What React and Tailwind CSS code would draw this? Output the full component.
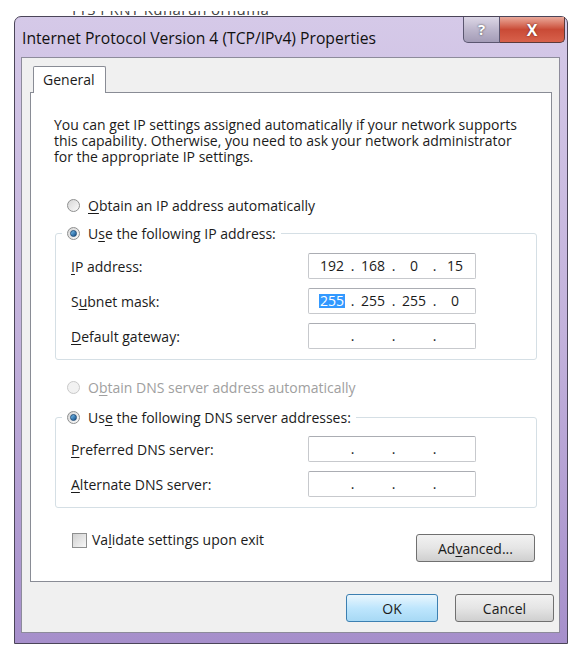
import React from 'react';

const U = ({ children }) => <span className="underline underline-offset-2">{children}</span>;

const Radio = ({ checked, disabled }) => (
  <span
    className={`inline-flex items-center justify-center w-[13px] h-[13px] rounded-full border shrink-0 ${
      disabled ? 'border-[#c9c9c9] bg-[#f2f2f2]' : 'border-[#8e8f8f] bg-gradient-to-br from-[#d6d6d6] to-[#fbfbfb]'
    }`}
  >
    {checked && (
      <span className="w-[7px] h-[7px] rounded-full bg-gradient-to-br from-[#7cc3f0] to-[#0d4e8a] border border-[#1f4d7a]" />
    )}
  </span>
);

const IpBox = ({ parts, selectFirst }) => (
  <div className="w-[168px] h-[26px] border border-[#c7c9cd] border-t-[#abadb3] rounded-[2px] bg-white flex items-center pl-[7px] text-[14px] leading-none">
    {[0, 1, 2, 3].map((i) => (
      <React.Fragment key={i}>
        <span className="w-[32px] flex justify-center">
          {parts[i] ? (
            <span className={i === 0 && selectFirst ? 'bg-[#3399ff] text-white px-px' : ''}>{parts[i]}</span>
          ) : null}
        </span>
        {i < 3 && <span className="w-[9px] text-center">.</span>}
      </React.Fragment>
    ))}
  </div>
);

const Row = ({ label, parts, selectFirst, first }) => (
  <div className={`flex items-center h-[26px] pl-[15px] ${first ? '' : 'mt-[9px]'}`}>
    <span className="w-[237px]">{label}</span>
    <IpBox parts={parts} selectFirst={selectFirst} />
  </div>
);

const WinButton = ({ children, primary, className = '' }) => (
  <button
    className={`h-[28px] rounded-[3px] border text-[14px] ${
      primary
        ? 'border-[#3c7fb1] bg-gradient-to-b from-[#eaf6fd] via-[#bee6fd] to-[#a7d9f5]'
        : 'border-[#707070] bg-gradient-to-b from-[#f2f2f2] via-[#e5e5e5] to-[#cfcfcf]'
    } ${className}`}
  >
    {children}
  </button>
);

export default function App() {
  return (
    <div className="w-[583px] h-[655px] bg-white overflow-hidden font-['Open_Sans','Noto_Sans',sans-serif] text-[14px] text-[#1b1b1b]">
      {/* window behind, mostly hidden */}
      <div className="h-[16px] pt-[11px]">
        <div className="h-[5px] overflow-hidden pl-[70px]">
          <div className="mt-[-12px] text-[15px] leading-[20px] text-[#444] tracking-wide whitespace-nowrap">
            TTS PRNT Kunarun ornuma
          </div>
        </div>
      </div>

      <div className="ml-[14px] w-[554px] h-[628px] rounded-t-[7px] border border-[#4b4559] bg-gradient-to-b from-[#d5c9e8] via-[#c3b2dc] to-[#a68fcb] flex flex-col">
        {/* title bar */}
        <div className="h-[40px] flex items-start">
          <div className="pl-[7px] pt-[11px] text-[15.7px] text-[#111] leading-[20px]">
            Internet Protocol Version 4 (TCP/IPv4) Properties
          </div>
          <div className="ml-auto mr-[2px] flex">
            <div className="w-[37px] h-[26px] rounded-bl-[5px] border border-t-0 border-[#5b5670] bg-gradient-to-b from-[#dcd7e6] via-[#bdb6cc] to-[#a49cb7] flex items-center justify-center text-[15px] font-bold text-white [text-shadow:0_0_2px_#333]">
              ?
            </div>
            <div className="w-[65px] h-[26px] rounded-br-[5px] border border-l-0 border-t-0 border-[#5b3a3a] bg-gradient-to-b from-[#e9a89a] via-[#c94a36] to-[#d8614b] flex items-center justify-center text-[16px] font-bold text-white [text-shadow:0_0_2px_#5a1a10]">
              X
            </div>
          </div>
        </div>

        {/* client area */}
        <div className="ml-[6px] mr-[7px] h-[576px] border border-[#8d8b9b] bg-[#f0f0f0] flex flex-col pt-[8px]">
          <div className="ml-[11px] w-[73px] h-[27px] -mb-px relative z-10 bg-white border border-b-0 border-[#898c95] rounded-t-[2px] pl-[9px] pt-[4px] leading-[18px]">
            General
          </div>
          <div className="ml-[8px] mr-[7px] h-[490px] border border-[#898c95] bg-white pl-[23px] pr-[10px] pt-[24px] flex flex-col">
            <p className="leading-[16px] whitespace-nowrap">
              You can get IP settings assigned automatically if your network supports
              <br />
              this capability. Otherwise, you need to ask your network administrator
              <br />
              for the appropriate IP settings.
            </p>

            <div className="mt-[30px] h-[20px] flex items-center pl-[13px] gap-[8px]">
              <Radio />
              <span>
                <U>O</U>btain an IP address automatically
              </span>
            </div>

            <fieldset className="mt-[8px] ml-px mr-[4px] border border-[#d5dfe5] rounded-[3px] pb-[10px]">
              <legend className="ml-[6px] px-[5px] h-[20px] flex items-center gap-[8px]">
                <Radio checked />
                <span>
                  U<U>s</U>e the following IP address:
                </span>
              </legend>
              <div className="mt-[10px]">
                <Row first label={<><U>I</U>P address:</>} parts={['192', '168', '0', '15']} />
                <Row label={<>S<U>u</U>bnet mask:</>} parts={['255', '255', '255', '0']} selectFirst />
                <Row label={<><U>D</U>efault gateway:</>} parts={[]} />
              </div>
            </fieldset>

            <div className="mt-[17px] h-[20px] flex items-center pl-[13px] gap-[8px] text-[#a0a0a0]">
              <Radio disabled />
              <span>
                O<U>b</U>tain DNS server address automatically
              </span>
            </div>

            <fieldset className="mt-[10px] ml-px mr-[4px] border border-[#d5dfe5] rounded-[3px] pb-[10px]">
              <legend className="ml-[6px] px-[5px] h-[20px] flex items-center gap-[8px]">
                <Radio checked />
                <span>
                  Us<U>e</U> the following DNS server addresses:
                </span>
              </legend>
              <div className="mt-[9px]">
                <Row first label={<><U>P</U>referred DNS server:</>} parts={[]} />
                <Row label={<><U>A</U>lternate DNS server:</>} parts={[]} />
              </div>
            </fieldset>

            <div className="mt-[25px] h-[29px] flex items-start">
              <span className="ml-[18px] w-[15px] h-[15px] border border-[#8e8f8f] bg-gradient-to-br from-[#d0d0d0] to-[#f8f8f8] shrink-0" />
              <span className="ml-[5px] leading-[16px] mt-[-1px]">
                Va<U>l</U>idate settings upon exit
              </span>
              <WinButton className="ml-auto mr-[6px] mt-px w-[119px]">
                Ad<U>v</U>anced...
              </WinButton>
            </div>
          </div>

          <div className="mt-[12px] mr-[5px] flex justify-end gap-[17px]">
            <WinButton primary className="w-[92px]">OK</WinButton>
            <WinButton className="w-[99px]">Cancel</WinButton>
          </div>
        </div>
      </div>
    </div>
  );
}
